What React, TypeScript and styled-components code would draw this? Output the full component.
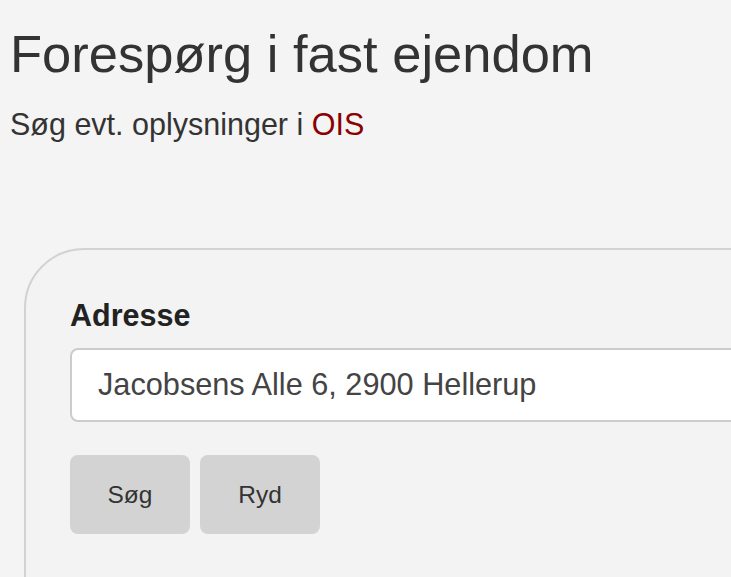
import styled, { createGlobalStyle } from "styled-components";
import { FC } from "react";

const GlobalStyle = createGlobalStyle`
  html, body {
    margin: 0;
    padding: 0;
    background: #f4f4f4;
    overflow: hidden;
  }
  body {
    font-family: "Liberation Sans", Arial, sans-serif;
    color: #333;
  }
`;

const Page = styled.div`
  padding: 0 10px;
  width: 1000px;
`;

const Title = styled.h1`
  margin: 24px 0 0;
  font-size: 52.5px;
  font-weight: 400;
  line-height: 60px;
  color: #333;
`;

const Lead = styled.p`
  margin: 23px 0 0;
  font-size: 30.5px;
  line-height: 34px;
  color: #333;

  a {
    color: #8b0000;
    text-decoration: none;
  }
`;

const Card = styled.div`
  margin: 107px 0 0 14px;
  width: 900px;
  min-height: 400px;
  border: 2px solid #d2d2d2;
  border-radius: 60px;
  background: #f3f3f3;
  padding: 48px 44px;
  box-sizing: border-box;
`;

const Label = styled.label`
  display: block;
  font-size: 30.5px;
  font-weight: 700;
  line-height: 34px;
  color: #222;
  margin-bottom: 16px;
`;

const Input = styled.input`
  display: block;
  width: 100%;
  height: 74px;
  box-sizing: border-box;
  border: 2px solid #ccc;
  border-radius: 8px;
  background: #fff;
  padding: 0 26px;
  font-family: "Liberation Sans", Arial, sans-serif;
  font-size: 30.7px;
  color: #444;
  outline: none;
`;

const Actions = styled.div`
  display: flex;
  gap: 10px;
  margin-top: 33px;
`;

const Button = styled.button`
  width: 120px;
  height: 79px;
  border: none;
  border-radius: 8px;
  background: #d3d3d3;
  font-family: "Liberation Sans", Arial, sans-serif;
  font-size: 24.5px;
  color: #333;
  cursor: pointer;
`;

const App: FC = () => {
  return (
    <>
      <GlobalStyle />
      <Page>
        <Title>Forespørg i fast ejendom</Title>
        <Lead>
          Søg evt. oplysninger i <a href="#">OIS</a>
        </Lead>
        <Card>
          <Label htmlFor="adresse">Adresse</Label>
          <Input
            id="adresse"
            defaultValue="Jacobsens Alle 6, 2900 Hellerup"
          />
          <Actions>
            <Button>Søg</Button>
            <Button>Ryd</Button>
          </Actions>
        </Card>
      </Page>
    </>
  );
};

export default App;
